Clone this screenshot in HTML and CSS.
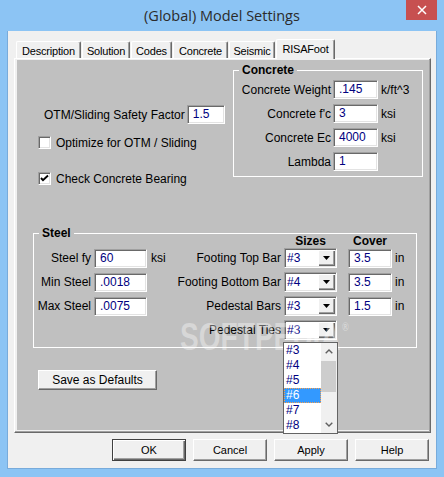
FILE: index.html
```html
<!DOCTYPE html>
<html>
<head>
<meta charset="utf-8">
<title>(Global) Model Settings</title>
<link rel="stylesheet" href="styles.css">
</head>
<body>
<div class="window">
  <div class="titlebar">
    <span></span>
    <div class="title">(Global) Model Settings</div>
    <div class="close"><svg width="10" height="10" viewBox="0 0 10 10"><path d="M1 1L9 9M9 1L1 9" stroke="#fff" stroke-width="1.5" fill="none"/></svg></div>
  </div>
  <div class="client">
    <div class="tabs">
      <div class="tab t1">Description</div>
      <div class="tab t2">Solution</div>
      <div class="tab t3">Codes</div>
      <div class="tab t4">Concrete</div>
      <div class="tab t5">Seismic</div>
      <div class="tab t6 active">RISAFoot</div>
    </div>
    <div class="page">
      <div class="sheet">
        <div class="top">
          <div class="left-col">
            <div class="sf-row"><span>OTM/Sliding Safety Factor</span><span class="field sf">1.5</span></div>
            <div class="chk-row r1"><span class="chk"></span><span>Optimize for OTM / Sliding</span></div>
            <div class="chk-row r2"><span class="chk"><svg width="11" height="11" viewBox="0 0 11 11"><path d="M2 5L4 7.2L9 2.5" stroke="#000" stroke-width="1.9" fill="none"/></svg></span><span>Check Concrete Bearing</span></div>
          </div>
          <fieldset class="group concrete">
            <legend>Concrete</legend>
            <div class="c-row first"><span class="lbl">Concrete Weight</span><span class="field">.145</span><span class="unit">k/ft^3</span></div>
            <div class="c-row"><span class="lbl">Concrete f'c</span><span class="field">3</span><span class="unit">ksi</span></div>
            <div class="c-row"><span class="lbl">Concrete Ec</span><span class="field">4000</span><span class="unit">ksi</span></div>
            <div class="c-row"><span class="lbl">Lambda</span><span class="field">1</span></div>
          </fieldset>
        </div>
        <fieldset class="group steel">
          <legend>Steel</legend>
          <div class="s-row head"><span class="hd sizes">Sizes</span><span class="hd cover">Cover</span></div>
          <div class="s-row">
            <span class="lbl">Steel fy</span><span class="field sw">60</span><span class="unit">ksi</span>
            <span class="lbl2">Footing Top Bar</span>
            <span class="combo"><span class="cv">#3</span><span class="cb"><svg width="7" height="4" viewBox="0 0 7 4"><path d="M0 0H7L3.5 4Z" fill="#000"/></svg></span></span>
            <span class="field cw">3.5</span><span class="unit2">in</span>
          </div>
          <div class="s-row">
            <span class="lbl">Min Steel</span><span class="field sw">.0018</span>
            <span class="lbl2">Footing Bottom Bar</span>
            <span class="combo"><span class="cv">#4</span><span class="cb"><svg width="7" height="4" viewBox="0 0 7 4"><path d="M0 0H7L3.5 4Z" fill="#000"/></svg></span></span>
            <span class="field cw">3.5</span><span class="unit2">in</span>
          </div>
          <div class="s-row">
            <span class="lbl">Max Steel</span><span class="field sw">.0075</span>
            <span class="lbl2">Pedestal Bars</span>
            <span class="combo"><span class="cv">#3</span><span class="cb"><svg width="7" height="4" viewBox="0 0 7 4"><path d="M0 0H7L3.5 4Z" fill="#000"/></svg></span></span>
            <span class="field cw">1.5</span><span class="unit2">in</span>
          </div>
          <div class="s-row">
            <span class="lbl2">Pedestal Ties</span>
            <span class="combo open"><span class="cv">#3</span><span class="cb"><svg width="7" height="4" viewBox="0 0 7 4"><path d="M0 0H7L3.5 4Z" fill="#000"/></svg></span>
              <span class="dropdown">
                <span class="items">
                  <span class="item">#3</span>
                  <span class="item">#4</span>
                  <span class="item">#5</span>
                  <span class="item sel">#6</span>
                  <span class="item">#7</span>
                  <span class="item">#8</span>
                </span>
                <span class="sbar">
                  <span class="sb-btn"><svg width="8" height="5" viewBox="0 0 8 5"><path d="M0.7 4.3L4 1L7.3 4.3" stroke="#606060" stroke-width="1.4" fill="none"/></svg></span>
                  <span class="sb-track"><span class="thumb"></span></span>
                  <span class="sb-btn"><svg width="8" height="5" viewBox="0 0 8 5"><path d="M0.7 0.7L4 4L7.3 0.7" stroke="#606060" stroke-width="1.4" fill="none"/></svg></span>
                </span>
              </span>
            </span>
          </div>
        </fieldset>
        <div class="btn save">Save as Defaults</div>
        <div class="watermark">SOFTPEDIA<span class="reg">®</span></div>
      </div>
    </div>
    <div class="buttons">
      <div class="btn dlg default">OK</div>
      <div class="btn dlg">Cancel</div>
      <div class="btn dlg">Apply</div>
      <div class="btn dlg">Help</div>
    </div>
  </div>
</div>
</body>
</html>
```
FILE: styles.css
```css
* { box-sizing: border-box; }
html, body { margin: 0; padding: 0; }
body {
  width: 444px;
  height: 477px;
  overflow: hidden;
  background: #8cc4f4;
  font-family: "Liberation Sans", Arial, sans-serif;
  font-size: 12px;
  color: #000;
}
.window {
  width: 444px;
  height: 477px;
  display: flex;
  flex-direction: column;
}
.titlebar {
  height: 31px;
  flex: none;
  display: grid;
  grid-template-columns: 1fr auto 1fr;
  align-items: center;
}
.title {
  font-family: "Open Sans", "Liberation Sans", sans-serif;
  font-size: 14.5px;
  color: #2b2b2b;
  white-space: nowrap;
}
.close {
  justify-self: end;
  align-self: start;
  width: 31px;
  height: 20px;
  margin-right: 7px;
  background: #c75050;
  display: flex;
  align-items: center;
  justify-content: center;
}
.client {
  flex: 1;
  margin: 0 7px 8px;
  border: 1px solid #78abdb;
  border-top: none;
  background: #f0f0f0;
  padding: 8px 5px 7px 6px;
  display: flex;
  flex-direction: column;
}
.tabs {
  height: 19px;
  flex: none;
  margin-left: 2px;
  display: flex;
  align-items: flex-end;
}
.tab {
  height: 17px;
  margin-right: 1px;
  border: 1px solid;
  border-color: #fff #696969 transparent #fff;
  border-bottom: none;
  border-radius: 2px 2px 0 0;
  box-shadow: inset -1px 0 #a0a0a0;
  background: #f0f0f0;
  font-size: 11px;
  letter-spacing: -0.2px;
  display: flex;
  align-items: center;
  justify-content: center;
  padding-top: 1px;
}
.t1 { width: 65px; }
.t2 { width: 48px; }
.t3 { width: 41px; }
.t4 { width: 55px; }
.t5 { width: 46px; }
.t6 { width: 59px; }
.tab.active {
  height: 20px;
  margin-bottom: -1px;
  position: relative;
  z-index: 1;
  padding-top: 0;
  padding-bottom: 2px;
}
.page {
  height: 375px;
  flex: none;
  border: 1px solid;
  border-color: #fff #696969 #696969 #fff;
  box-shadow: inset -1px -1px #a0a0a0;
  padding: 1px 1px 2px 2px;
  background: #f0f0f0;
  display: flex;
}
.sheet {
  flex: 1;
  background: #c0c0c0;
  position: relative;
}
.top {
  display: flex;
  align-items: flex-start;
}
.left-col {
  width: 216px;
  flex: none;
  padding-top: 45px;
  display: flex;
  flex-direction: column;
  align-items: flex-start;
}
.sf-row {
  height: 19px;
  margin-left: 27px;
  display: flex;
  align-items: center;
  gap: 2px;
}
.field {
  display: block;
  height: 19px;
  background: #fff;
  border: 1px solid;
  border-color: #a0a0a0 #fff #fff #a0a0a0;
  box-shadow: inset 1px 1px #696969, inset -1px -1px #e3e3e3;
  padding-left: 5px;
  line-height: 17px;
  color: #000080;
  white-space: nowrap;
}
.field.sf { width: 38px; }
.chk-row {
  height: 13px;
  margin-left: 21px;
  display: flex;
  align-items: center;
  gap: 5px;
}
.chk-row.r1 { margin-top: 12px; }
.chk-row.r2 { margin-top: 23px; }
.chk {
  width: 13px;
  height: 13px;
  background: #fff;
  border: 1px solid;
  border-color: #a0a0a0 #fff #fff #a0a0a0;
  box-shadow: inset 1px 1px #696969, inset -1px -1px #e3e3e3;
  display: flex;
  align-items: center;
  justify-content: center;
}
.group {
  border: 1px solid #fff;
  margin: 0;
  min-width: 0;
}
.group legend {
  padding: 0 3px;
  font-weight: bold;
  line-height: 14px;
}
.concrete {
  width: 190px;
  flex: none;
  margin-top: 3px;
  padding: 3px 5px 5px 5px;
}
.c-row {
  height: 19px;
  display: grid;
  grid-template-columns: 92px 45px auto;
  column-gap: 2px;
  align-items: center;
}
.c-row + .c-row { margin-top: 5px; }
.c-row.first { margin-bottom: 5px; }
.lbl { justify-self: end; white-space: nowrap; }
.unit { padding-left: 1px; white-space: nowrap; }
.steel {
  margin: 41px 12px 0 16px;
  padding: 0 5px 7px 5px;
}
.s-row {
  height: 20px;
  display: grid;
  grid-template-columns: 52px 60px 24px 109px 53px 55px auto;
  align-items: center;
}
.s-row + .s-row { margin-top: 4px; }
.s-row.head {
  height: 14px;
  margin-top: -6px;
}
.s-row.head + .s-row { margin-top: 0; }
.hd { font-weight: bold; text-align: center; }
.hd.sizes { grid-column: 5; }
.hd.cover { grid-column: 6; justify-self: end; width: 44px; }
.s-row .lbl { grid-column: 1; }
.field.sw { grid-column: 2; width: 53px; margin-left: 3px; }
.s-row .unit { grid-column: 3; padding-left: 0; }
.lbl2 { grid-column: 4; justify-self: end; padding-right: 3px; white-space: nowrap; }
.combo {
  grid-column: 5;
  position: relative;
  width: 53px;
  height: 20px;
  background: #fff;
  border: 1px solid;
  border-color: #a0a0a0 #fff #fff #a0a0a0;
  box-shadow: inset 1px 1px #696969, inset -1px -1px #e3e3e3;
  padding: 1px;
  display: flex;
  align-items: stretch;
  color: #000080;
}
.cv {
  flex: 1;
  padding-left: 1px;
  line-height: 16px;
}
.cb {
  width: 17px;
  background: #f0f0f0;
  box-shadow: inset 1px 1px #fff, inset -1px -1px #696969, inset -2px -2px #a0a0a0;
  display: flex;
  align-items: center;
  justify-content: center;
  padding-bottom: 1px;
}
.field.cw { grid-column: 6; justify-self: end; width: 44px; }
.unit2 { grid-column: 7; padding-left: 3px; }
.dropdown {
  position: absolute;
  left: -2px;
  top: calc(100% + 3px);
  width: 55px;
  height: 92px;
  border: 1px solid #646464;
  background: #fff;
  display: flex;
  z-index: 3;
}
.items {
  flex: 1;
  display: flex;
  flex-direction: column;
}
.item {
  height: 15px;
  line-height: 15px;
  padding-left: 2px;
  color: #000080;
}
.item.sel {
  background: #3399ff;
  color: #fff;
  border: 1px dotted #f5a050;
  line-height: 13px;
  padding-left: 1px;
}
.sbar {
  width: 16px;
  background: #f0f0f0;
  display: flex;
  flex-direction: column;
}
.sb-btn {
  height: 17px;
  display: flex;
  align-items: center;
  justify-content: center;
}
.sb-track {
  flex: 1;
  display: flex;
  flex-direction: column;
}
.thumb {
  height: 31px;
  margin: 1px 1px 0 0;
  background: #cdcdcd;
}
.btn {
  background: #f0f0f0;
  border: 1px solid;
  border-color: #fff #696969 #696969 #fff;
  box-shadow: inset -1px -1px #a0a0a0;
  display: flex;
  align-items: center;
  justify-content: center;
  white-space: nowrap;
}
.btn.save {
  width: 119px;
  height: 20px;
  margin: 22px 0 0 21px;
}
.watermark {
  position: absolute;
  left: 163px;
  top: 257px;
  font-size: 39px;
  line-height: 39px;
  font-weight: bold;
  color: rgba(255, 255, 255, 0.38);
  transform: scaleX(0.72);
  transform-origin: 0 0;
  white-space: nowrap;
  pointer-events: none;
  z-index: 2;
}
.watermark .reg {
  font-size: 12px;
  vertical-align: top;
  line-height: 20px;
  margin-left: 2px;
}
.buttons {
  flex: none;
  margin-top: 6px;
  padding-right: 2px;
  display: flex;
  justify-content: flex-end;
  gap: 7px;
}
.btn.dlg {
  width: 74px;
  height: 22px;
  font-size: 11px;
}
.btn.default {
  border: 1px solid #404040;
  box-shadow: inset 1px 1px #fff, inset -1px -1px #696969, inset -2px -2px #a0a0a0;
}
```
